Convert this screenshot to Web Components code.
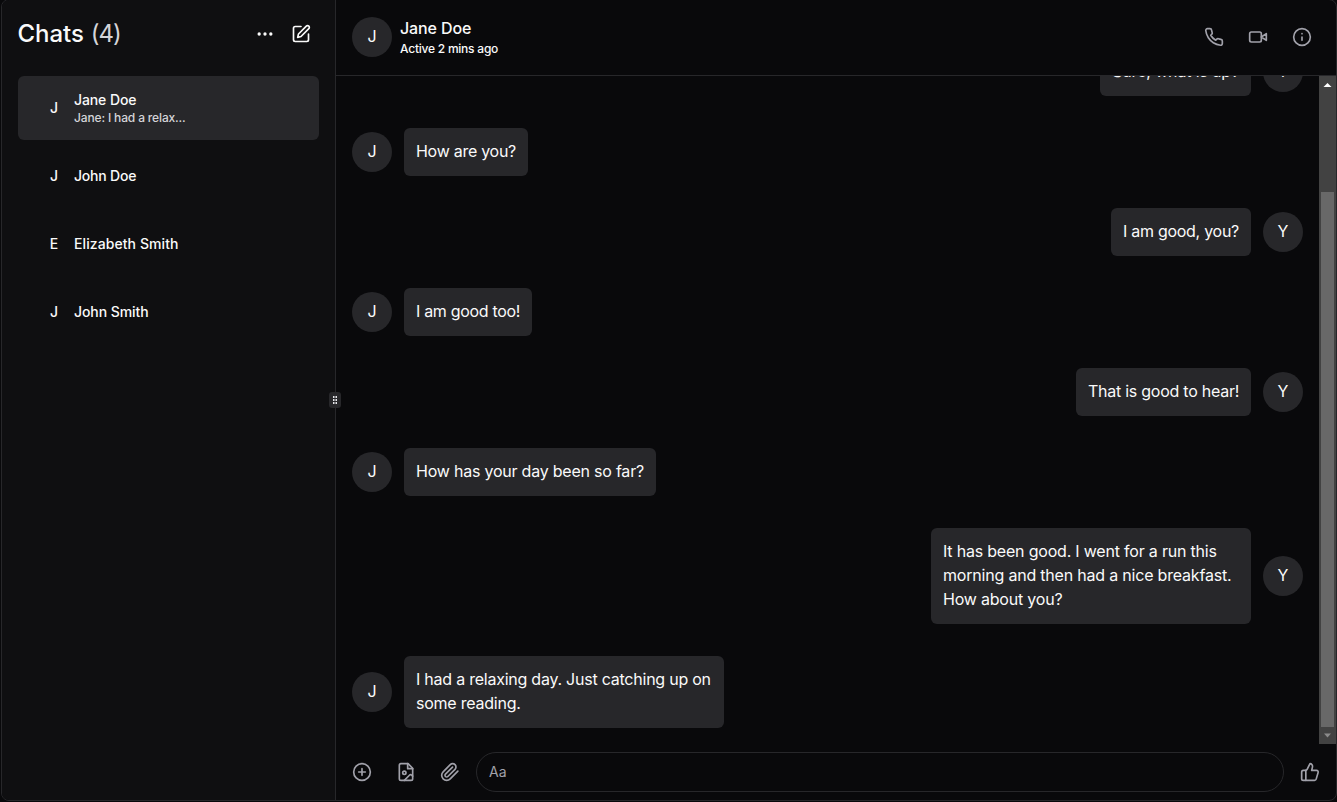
<!DOCTYPE html>
<html lang="en">
<head>
<meta charset="utf-8">
<title>Chats</title>
<style>
html,body{margin:0;height:100%;background:#09090b;overflow:hidden}
body{font-family:Inter,"Liberation Sans",sans-serif;color:#fafafa;font-size:16px;line-height:24px}
</style>
</head>
<body>
<chat-app></chat-app>
<script>
const ICONS = {
  more:'<circle cx="12" cy="12" r="1"/><circle cx="19" cy="12" r="1"/><circle cx="5" cy="12" r="1"/>',
  edit:'<path d="M12 3H5a2 2 0 0 0-2 2v14a2 2 0 0 0 2 2h14a2 2 0 0 0 2-2v-7"/><path d="M18.375 2.625a2.121 2.121 0 1 1 3 3L12 15l-4 1 1-4Z"/>',
  phone:'<path d="M22 16.92v3a2 2 0 0 1-2.18 2 19.79 19.79 0 0 1-8.63-3.07 19.5 19.5 0 0 1-6-6 19.79 19.79 0 0 1-3.07-8.67A2 2 0 0 1 4.11 2h3a2 2 0 0 1 2 1.72 12.84 12.84 0 0 0 .7 2.81 2 2 0 0 1-.45 2.11L8.09 9.91a16 16 0 0 0 6 6l1.27-1.27a2 2 0 0 1 2.11-.45 12.84 12.84 0 0 0 2.81.7A2 2 0 0 1 22 16.92z"/>',
  video:'<path d="m22 8-6 4 6 4V8Z"/><rect width="14" height="12" x="2" y="6" rx="2"/>',
  info:'<circle cx="12" cy="12" r="10"/><path d="M12 16v-4M12 8h.01"/>',
  plus:'<circle cx="12" cy="12" r="10"/><path d="M8 12h8M12 8v8"/>',
  image:'<path d="M14.5 2H6a2 2 0 0 0-2 2v16a2 2 0 0 0 2 2h12a2 2 0 0 0 2-2V7.5L14.5 2z"/><path d="M14 2v6h6"/><circle cx="10" cy="13" r="2"/><path d="m20 17-1.09-1.09a2 2 0 0 0-2.82 0L10 22"/>',
  clip:'<path d="m21.44 11.05-9.19 9.19a6 6 0 0 1-8.49-8.49l8.57-8.57A4 4 0 1 1 18 8.84l-8.59 8.57a2 2 0 0 1-2.83-2.83l8.49-8.48"/>',
  thumb:'<path d="M7 10v12"/><path d="M15 5.88 14 10h5.83a2 2 0 0 1 1.92 2.56l-2.33 8A2 2 0 0 1 17.5 22H4a2 2 0 0 1-2-2v-8a2 2 0 0 1 2-2h2.76a2 2 0 0 0 1.79-1.11L12 2a3.13 3.13 0 0 1 3 3.88Z"/>'
};
function define(name, render){
  customElements.define(name, class extends HTMLElement{
    connectedCallback(){
      if(this.shadowRoot) return;
      this.attachShadow({mode:'open'}).innerHTML = render(this);
    }
  });
}
define('icon-button', el => `<style>
:host{display:flex;align-items:center;justify-content:center;width:36px;height:36px;flex:none;color:#a1a1aa}
svg{width:20px;height:20px;fill:none;stroke:currentColor;stroke-width:2;stroke-linecap:round;stroke-linejoin:round}
</style><svg viewBox="0 0 24 24">${ICONS[el.getAttribute('name')]}</svg>`);
define('user-avatar', () => `<style>
:host{display:flex;align-items:center;justify-content:center;width:40px;height:40px;box-sizing:border-box;padding-bottom:var(--lift,2px);flex:none;border-radius:50%;background:#27272a}
</style><slot></slot>`);
define('chat-item', el => `<style>
:host{display:flex;align-items:center;height:64px;box-sizing:border-box;padding:0 16px;border-radius:6px;font-size:14px;font-weight:500;line-height:20px}
:host([active]){background:#27272a}
user-avatar{background:none;--lift:0}
.t{display:flex;flex-direction:column}
.n{letter-spacing:var(--track,0)}
.s{font-size:12px;line-height:16px;font-weight:450;color:#d4d4d8;letter-spacing:-.15px}
</style><user-avatar>${el.getAttribute('initial')}</user-avatar><div class="t"><span class="n"><slot></slot></span>${el.hasAttribute('sub')?`<span class="s">${el.getAttribute('sub')}</span>`:''}</div>`);
define('chat-message', el => `<style>
:host{display:flex;align-items:center;gap:12px;padding:16px;flex:none}
:host([mine]){flex-direction:row-reverse}
.b{box-sizing:border-box;max-width:320px;padding:11px 12px 13px;border-radius:6px;background:#27272a;white-space:pre-line;letter-spacing:var(--track,0)}
:host([wide]) .b{width:320px}
</style><user-avatar>${el.hasAttribute('mine')?'Y':'J'}</user-avatar><div class="b"><slot></slot></div>`);
define('scroll-bar', () => `<style>
:host{display:flex;flex-direction:column;align-items:center;width:17px;flex:none;background:#424242}
svg{width:17px;height:17px;flex:none;display:block}
i{flex:none;width:13px;height:535px;margin-top:99px;background:#686868}
</style><svg viewBox="0 0 17 17"><path d="M4.500 11h8l-4-4z" fill="#fff"/></svg><i></i><svg viewBox="0 0 17 17"><path d="M5 6.500h7l-3.500 4z" fill="#8b8b8b"/></svg>`);
define('chat-sidebar', () => `<style>
:host{display:flex;flex-direction:column;width:333px;flex:none;box-sizing:border-box;padding:16px;background:#0f0f11}
header{display:flex;align-items:center;height:36px}
h1{margin:0;font-size:24px;font-weight:500;line-height:32px;flex:1;display:flex;gap:8px}
h1 span{letter-spacing:-.05px;margin-left:-.5px}
h1 span+span{color:#d4d4d8;font-weight:400;letter-spacing:-1px;margin-left:-1px}
icon-button{color:#fafafa}
nav{display:flex;flex-direction:column;gap:4px;margin-top:24px}
</style><header><h1><span>Chats</span><span>(4)</span></h1><icon-button name="more"></icon-button><icon-button name="edit"></icon-button></header>
<nav><chat-item active initial="J" sub="Jane: I had a relax..." style="--track:-.1px">Jane Doe</chat-item><chat-item initial="J" style="--track:-.2px">John Doe</chat-item><chat-item initial="E" style="--track:.08px">Elizabeth Smith</chat-item><chat-item initial="J" style="--track:-.08px">John Smith</chat-item></nav>`);
define('split-handle', () => `<style>
:host{display:block;width:1px;flex:none;background:#27272a;position:relative}
i{position:absolute;left:-6px;top:392px;width:12px;height:16px;border-radius:3px;background:#27272a;display:flex;align-items:center;justify-content:center}
svg{width:10px;height:10px}
</style><i><svg viewBox="0 0 10 10" fill="#e4e4e7"><path d="M3 1h1.500v2H3zM5.500 1h1.500v2H5.500zM3 4h1.500v2H3zM5.500 4h1.500v2H5.500zM3 7h1.500v2H3zM5.500 7h1.500v2H5.500z"/></svg></i>`);
define('chat-panel', () => `<style>
:host{display:flex;flex-direction:column;flex:1;min-width:0}
header{display:flex;align-items:center;height:76px;box-sizing:border-box;padding:0 16px 2px;gap:8px;border-bottom:1px solid #27272a;flex:none}
.who{display:flex;flex-direction:column;flex:1}
.who b{font-weight:500;line-height:25px;letter-spacing:-.1px}
.who span{font-size:12px;line-height:16px;letter-spacing:-.23px;font-weight:450}
.acts{display:flex;gap:8px}
.mid{display:flex;height:668px;flex:none}
.list{flex:1;display:flex;flex-direction:column;justify-content:flex-end;overflow:hidden;min-width:0}
footer{display:flex;align-items:center;gap:8px;height:56px;padding:0 8px}
.in{flex:1;box-sizing:border-box;height:40px;border:1px solid #27272a;border-radius:20px;padding:0 12px;font-size:14px;line-height:38px;color:#a1a1aa}
</style>
<header><user-avatar>J</user-avatar><div class="who"><b>Jane Doe</b><span>Active 2 mins ago</span></div><div class="acts"><icon-button name="phone"></icon-button><icon-button name="video"></icon-button><icon-button name="info"></icon-button></div></header>
<div class="mid"><div class="list">
<chat-message mine style="--track:-.155px">Sure, what is up?</chat-message>
<chat-message style="--track:-.275px">How are you?</chat-message>
<chat-message mine style="--track:-.275px">I am good, you?</chat-message>
<chat-message style="--track:-.32px">I am good too!</chat-message>
<chat-message mine style="--track:-.255px">That is good to hear!</chat-message>
<chat-message style="--track:-.22px">How has your day been so far?</chat-message>
<chat-message mine wide style="--track:-.2px">It has been good. I went for a run this
morning and then had a nice breakfast.
How about you?</chat-message>
<chat-message wide style="--track:-.235px">I had a relaxing day. Just catching up on
some reading.</chat-message>
</div><scroll-bar></scroll-bar></div>
<footer><icon-button name="plus"></icon-button><icon-button name="image"></icon-button><icon-button name="clip"></icon-button><div class="in">Aa</div><icon-button name="thumb"></icon-button></footer>`);
define('chat-app', () => `<style>
:host{display:flex;box-sizing:border-box;width:1336px;height:802px;margin:-1px 0 0 1px;border:1px solid #27272a;border-radius:8px;overflow:hidden}
</style><chat-sidebar></chat-sidebar><split-handle></split-handle><chat-panel></chat-panel>`);
</script>
</body>
</html>
